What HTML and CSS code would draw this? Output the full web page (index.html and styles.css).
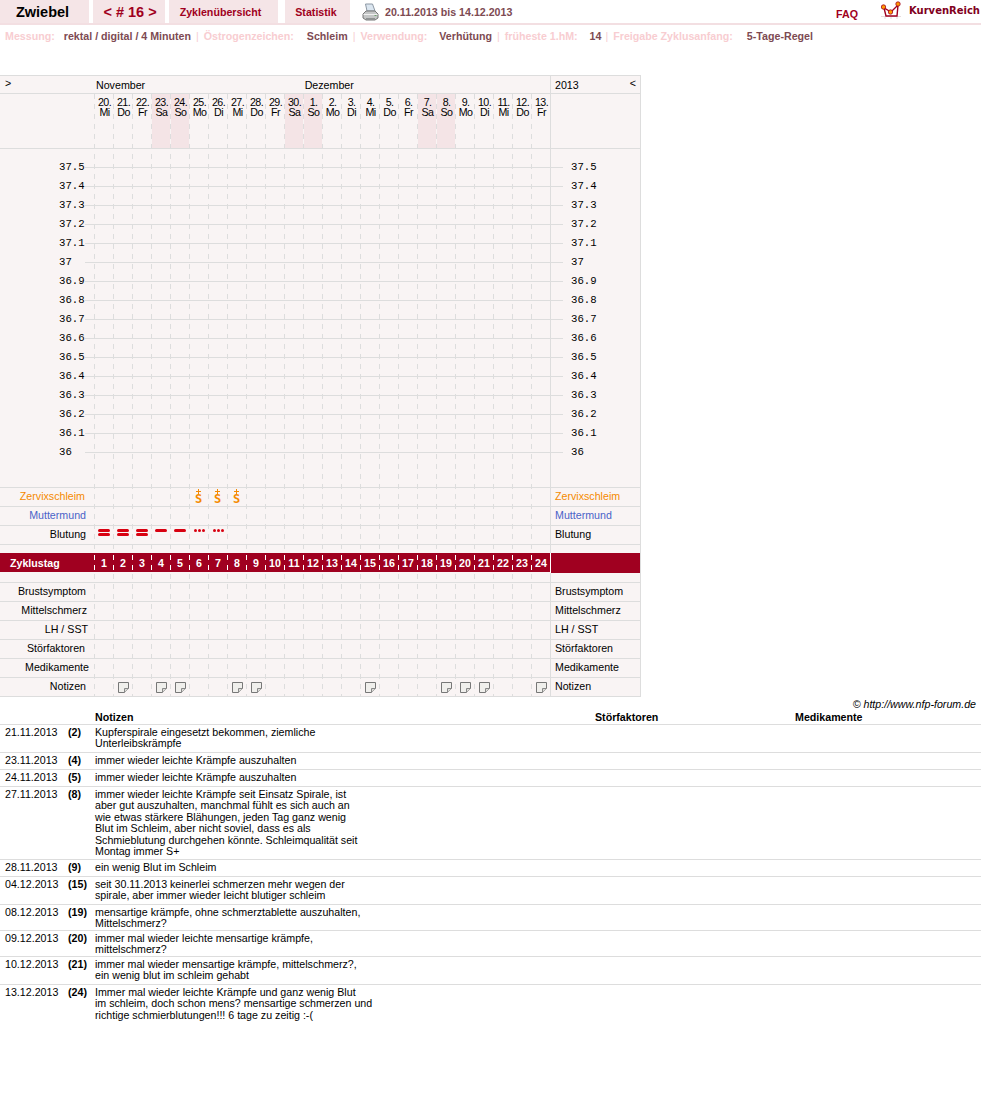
FILE: index.html
```html
<!DOCTYPE html>
<html lang="de">
<head>
<meta charset="utf-8">
<title>Zwiebel – Zyklus 16</title>
<link rel="stylesheet" href="styles.css">
</head>
<body>
<svg class="defs" width="0" height="0" aria-hidden="true">
  <symbol id="note" viewBox="0 0 11 11"><path d="M.5.5h10v6l-4 4h-6z" fill="#f0efec" stroke="#777"/><path d="M6.500 10.500v-4h4" fill="#dcdbd8" stroke="#888"/></symbol>
</svg>
<header class="top">
  <div class="tab tab-name">Zwiebel</div>
  <div class="tab tab-cycle">&lt; # 16 &gt;</div>
  <div class="tab tab-over">Zyklenübersicht</div>
  <div class="tab tab-stat">Statistik</div>
  <svg class="printer" width="17" height="19" viewBox="0 0 17 19"><path d="M3.500 1h7l2.500 7H5z" fill="#dbe6f0" stroke="#8d98a4"/><path d="M1 11l3-3h9l3 3v4l-3 2H4l-3-2z" fill="#c4c6c6" stroke="#777"/><path d="M1.500 11.500h14" stroke="#f0f0f0"/><path d="M4 15h9v2H4z" fill="#8f9292"/><path d="M12.500 12.500h2" stroke="#6fa36f"/></svg>
  <div class="range">20.11.2013 bis 14.12.2013</div>
  <a class="faq">FAQ</a>
  <svg class="crown" width="20" height="18" viewBox="0 0 20 18"><path d="M0 15.500h20M4 18v-3M10 18v-3M16 18v-3" stroke="#e6dcdc" fill="none"/><path d="M3 7l2 8h11l1-11-7 7z" fill="#fff" stroke="#a00020" stroke-width="1.400"/><circle cx="2.500" cy="6" r="2.200" fill="#f90" stroke="#a00020" stroke-width=".8"/><circle cx="9.500" cy="11" r="2.200" fill="#f90" stroke="#a00020" stroke-width=".8"/><circle cx="17" cy="3" r="2.200" fill="#f90" stroke="#a00020" stroke-width=".8"/></svg>
  <div class="brand">KurvenReich</div>
</header>
<div class="info">
  <span class="lbl">Messung:</span><span class="val v1">rektal / digital / 4 Minuten</span><span class="sep">|</span>
  <span class="lbl">Östrogenzeichen:</span><span class="val v2">Schleim</span><span class="sep">|</span>
  <span class="lbl">Verwendung:</span><span class="val v3">Verhütung</span><span class="sep">|</span>
  <span class="lbl">früheste 1.hM:</span><span class="val v4">14</span><span class="sep">|</span>
  <span class="lbl">Freigabe Zyklusanfang:</span><span class="val v5">5-Tage-Regel</span>
</div>

<section class="chart">
  <div class="vlines"></div>
  <div class="row head">
    <div class="arrow-l">&gt;</div>
    <div class="months"><span class="m-nov">November</span><span class="m-dez">Dezember</span></div>
    <div class="side year"><span>2013</span><span class="arrow-r">&lt;</span></div>
  </div>
  <div class="row days">
    <div></div>
    <div class="d">20.<br>Mi</div><div class="d">21.<br>Do</div><div class="d">22.<br>Fr</div><div class="d we">23.<br>Sa</div><div class="d we">24.<br>So</div><div class="d">25.<br>Mo</div><div class="d">26.<br>Di</div><div class="d">27.<br>Mi</div><div class="d">28.<br>Do</div><div class="d">29.<br>Fr</div><div class="d we">30.<br>Sa</div><div class="d we">1.<br>So</div><div class="d">2.<br>Mo</div><div class="d">3.<br>Di</div><div class="d">4.<br>Mi</div><div class="d">5.<br>Do</div><div class="d">6.<br>Fr</div><div class="d we">7.<br>Sa</div><div class="d we">8.<br>So</div><div class="d">9.<br>Mo</div><div class="d">10.<br>Di</div><div class="d">11.<br>Mi</div><div class="d">12.<br>Do</div><div class="d">13.<br>Fr</div>
    <div class="side"></div>
  </div>
  <div class="temps">
    <div class="t"><span>37.5</span><span>37.5</span></div>
    <div class="t"><span>37.4</span><span>37.4</span></div>
    <div class="t"><span>37.3</span><span>37.3</span></div>
    <div class="t"><span>37.2</span><span>37.2</span></div>
    <div class="t"><span>37.1</span><span>37.1</span></div>
    <div class="t"><span>37</span><span>37</span></div>
    <div class="t"><span>36.9</span><span>36.9</span></div>
    <div class="t"><span>36.8</span><span>36.8</span></div>
    <div class="t"><span>36.7</span><span>36.7</span></div>
    <div class="t"><span>36.6</span><span>36.6</span></div>
    <div class="t"><span>36.5</span><span>36.5</span></div>
    <div class="t"><span>36.4</span><span>36.4</span></div>
    <div class="t"><span>36.3</span><span>36.3</span></div>
    <div class="t"><span>36.2</span><span>36.2</span></div>
    <div class="t"><span>36.1</span><span>36.1</span></div>
    <div class="t"><span>36</span><span>36</span></div>
  </div>
  <div class="row rowline">
    <div class="name zerv pr9">Zervixschleim</div>
    <div class="c"></div><div class="c"></div><div class="c"></div><div class="c"></div><div class="c"></div>
    <div class="c mucus">S</div><div class="c mucus">S</div><div class="c mucus">S</div>
    <div class="side zerv">Zervixschleim</div>
  </div>
  <div class="row rowline">
    <div class="name mutt">Muttermund</div>
    <div class="side mutt">Muttermund</div>
  </div>
  <div class="row rowline">
    <div class="name">Blutung</div>
    <div class="c blood"><i class="bar"></i><i class="bar"></i></div><div class="c blood"><i class="bar"></i><i class="bar"></i></div><div class="c blood"><i class="bar"></i><i class="bar"></i></div>
    <div class="c blood"><i class="bar"></i></div><div class="c blood"><i class="bar"></i></div>
    <div class="c blood"><i class="dots"><b></b><b></b><b></b></i></div><div class="c blood"><i class="dots"><b></b><b></b><b></b></i></div>
    <div class="side">Blutung</div>
  </div>
  <div class="row gap-b"><div class="side"></div></div>
  <div class="row cycle">
    <div class="cycle-name">Zyklustag</div>
    <div>1</div><div>2</div><div>3</div><div>4</div><div>5</div><div>6</div><div>7</div><div>8</div><div>9</div><div>10</div><div>11</div><div>12</div><div>13</div><div>14</div><div>15</div><div>16</div><div>17</div><div>18</div><div>19</div><div>20</div><div>21</div><div>22</div><div>23</div><div>24</div>
    <div class="side"></div>
  </div>
  <div class="row rowline gap-c"><div class="side"></div></div>
  <div class="row rowline"><div class="name">Brustsymptom</div><div class="side">Brustsymptom</div></div>
  <div class="row rowline"><div class="name pr7">Mittelschmerz</div><div class="side">Mittelschmerz</div></div>
  <div class="row rowline"><div class="name pr6">LH / SST</div><div class="side">LH / SST</div></div>
  <div class="row rowline"><div class="name pr9">Störfaktoren</div><div class="side">Störfaktoren</div></div>
  <div class="row rowline"><div class="name pr5">Medikamente</div><div class="side">Medikamente</div></div>
  <div class="row rowline">
    <div class="name">Notizen</div>
    <div class="c"></div><div class="c n"><svg><use href="#note"/></svg></div><div class="c"></div><div class="c n"><svg><use href="#note"/></svg></div><div class="c n"><svg><use href="#note"/></svg></div><div class="c"></div><div class="c"></div><div class="c n"><svg><use href="#note"/></svg></div><div class="c n"><svg><use href="#note"/></svg></div><div class="c"></div><div class="c"></div><div class="c"></div><div class="c"></div><div class="c"></div><div class="c n"><svg><use href="#note"/></svg></div><div class="c"></div><div class="c"></div><div class="c"></div><div class="c n"><svg><use href="#note"/></svg></div><div class="c n"><svg><use href="#note"/></svg></div><div class="c n"><svg><use href="#note"/></svg></div><div class="c"></div><div class="c"></div><div class="c n"><svg><use href="#note"/></svg></div>
    <div class="side">Notizen</div>
  </div>
</section>

<p class="copy">© http://www.nfp-forum.de</p>

<table class="notes">
  <colgroup><col class="c-date"><col class="c-num"><col class="c-note"><col class="c-st"><col></colgroup>
  <thead><tr><th></th><th></th><th>Notizen</th><th>Störfaktoren</th><th>Medikamente</th></tr></thead>
  <tbody>
    <tr class="h28"><td>21.11.2013</td><td class="num">(2)</td><td>Kupferspirale eingesetzt bekommen, ziemliche<br>Unterleibskrämpfe</td><td></td><td></td></tr>
    <tr class="h17"><td>23.11.2013</td><td class="num">(4)</td><td>immer wieder leichte Krämpfe auszuhalten</td><td></td><td></td></tr>
    <tr class="h17"><td>24.11.2013</td><td class="num">(5)</td><td>immer wieder leichte Krämpfe auszuhalten</td><td></td><td></td></tr>
    <tr class="h73"><td>27.11.2013</td><td class="num">(8)</td><td>immer wieder leichte Krämpfe seit Einsatz Spirale, ist<br>aber gut auszuhalten, manchmal fühlt es sich auch an<br>wie etwas stärkere Blähungen, jeden Tag ganz wenig<br>Blut im Schleim, aber nicht soviel, dass es als<br>Schmieblutung durchgehen könnte. Schleimqualität seit<br>Montag immer S+</td><td></td><td></td></tr>
    <tr class="h17"><td>28.11.2013</td><td class="num">(9)</td><td>ein wenig Blut im Schleim</td><td></td><td></td></tr>
    <tr class="h28"><td>04.12.2013</td><td class="num">(15)</td><td>seit 30.11.2013 keinerlei schmerzen mehr wegen der<br>spirale, aber immer wieder leicht blutiger schleim</td><td></td><td></td></tr>
    <tr class="h26"><td>08.12.2013</td><td class="num">(19)</td><td>mensartige krämpfe, ohne schmerztablette auszuhalten,<br>Mittelschmerz?</td><td></td><td></td></tr>
    <tr class="h26"><td>09.12.2013</td><td class="num">(20)</td><td>immer mal wieder leichte mensartige krämpfe,<br>mittelschmerz?</td><td></td><td></td></tr>
    <tr class="h28"><td>10.12.2013</td><td class="num">(21)</td><td>immer mal wieder mensartige krämpfe, mittelschmerz?,<br>ein wenig blut im schleim gehabt</td><td></td><td></td></tr>
    <tr class="last"><td>13.12.2013</td><td class="num">(24)</td><td>Immer mal wieder leichte Krämpfe und ganz wenig Blut<br>im schleim, doch schon mens? mensartige schmerzen und<br>richtige schmierblutungen!!! 6 tage zu zeitig :-(</td><td></td><td></td></tr>
  </tbody>
</table>
</body>
</html>
```
FILE: styles.css
```css
* { box-sizing: border-box; }
html, body { margin: 0; padding: 0; }
body { background: #fff; color: #000; font: 10.67px/12px "Liberation Sans", Arial, sans-serif; width: 981px; height: 1106px; overflow: hidden; }
.defs { position: absolute; }

/* top bar */
.top { display: flex; height: 25px; border-bottom: 2px solid #f3dfe2; }
.tab { height: 23px; background: #f5e5e7; color: #a00020; font-weight: bold; display: flex; align-items: center; justify-content: center; }
.tab-name { width: 89px; color: #000; font-size: 14.5px; padding-right: 4px; }
.tab-cycle { width: 72px; margin-left: 4px; font-size: 14.5px; padding-left: 2px; }
.tab-over { width: 109px; margin-left: 4px; padding-right: 6px; }
.tab-stat { width: 65px; margin-left: 7px; padding-right: 3px; }
.printer { margin: 3px 0 0 12px; }
.range { margin: 6px 0 0 6px; color: #7d4a52; font-weight: bold; }
.faq { margin: 8px 0 0 auto; color: #a00020; font-weight: bold; }
.crown { margin: 1px 0 0 23px; }
.brand { margin: 5px 1px 0 8px; color: #800020; font: bold 10px/12px "DejaVu Sans", sans-serif; }

/* settings line */
.info { height: 50px; padding: 5px 0 0 5px; font-weight: bold; white-space: nowrap; }
.lbl { color: #f8cdd1; }
.val { color: #7d4a52; }
.sep { color: #f8cdd1; font-weight: normal; margin: 0 2px 0 5px; }
.v1 { margin-left: 9px; }
.v2 { margin-left: 13px; }
.v3 { margin-left: 12px; }
.v4 { margin: 0 -1px 0 12px; }
.v5 { margin-left: 14px; }

/* chart */
.chart { position: relative; width: 641px; background: #f9f4f4; border-top: 1px solid #ddd; border-right: 1px solid #ddd; }
.vlines { position: absolute; left: 94px; top: 18px; bottom: 0; width: 456px; background: url("data:image/svg+xml,%3Csvg xmlns='http://www.w3.org/2000/svg' width='19' height='10'%3E%3Crect width='1' height='5' fill='%23ddd'/%3E%3C/svg%3E") 0 0 / 19px 10px repeat; }
.row { position: relative; display: grid; grid-template-columns: 94px repeat(24, 19px) 90px; }
.rowline { height: 19px; border-bottom: 1px solid #ddd; align-items: center; }
.side { grid-column: 26; height: 100%; border-left: 1px solid #ddd; padding: 0 0 2px 4px; display: flex; align-items: center; }
.name { grid-column: 1; text-align: right; padding: 0 8px 2px 0; white-space: nowrap; }
.pr5 { padding-right: 5px; }
.pr6 { padding-right: 6px; }
.pr7 { padding-right: 7px; }
.pr9 { padding-right: 9px; }
.zerv { color: #f58a00; }
.mutt { color: #4a63c8; }

.head { height: 18px; border-bottom: 1px solid #ddd; grid-template-columns: 94px 456px 90px; }
.arrow-l { padding: 2px 0 0 5px; line-height: 11px; }
.months { position: relative; display: flex; align-items: center; padding-left: 2px; }
.m-dez { margin-left: 159.500px; }
.year { justify-content: space-between; padding: 0 4px 0 4px; grid-column: 3; }
.arrow-r { align-self: flex-start; line-height: 11px; margin-top: 2px; }

.days { height: 55px; border-bottom: 1px solid #ddd; }
.d { height: 54px; margin-left: 1px; width: 18px; padding: 3px 0 0 1px; text-align: center; letter-spacing: -.6px; line-height: 10px; }
.days > div:first-child { height: 54px; }
.we { background: #f4e4e6; }

.temps { height: 339px; padding-top: 9px; border-bottom: 1px solid #ddd; background: linear-gradient(#ddd, #ddd) no-repeat 550px 0 / 1px 100%; }
.t { position: relative; height: 19px; display: grid; grid-template-columns: 550px 90px; align-items: center; font: 10.67px/19px "Liberation Mono", monospace; background: linear-gradient(#ddd, #ddd) no-repeat 85px 9px / 478px 1px; }
.t span { display: block; width: 26px; margin-left: 59px; background: #f9f4f4; }
.t span + span { margin-left: 21px; }

.c { position: relative; height: 18px; display: flex; flex-direction: column; align-items: center; justify-content: center; }
.mucus { justify-content: flex-end; padding-bottom: 2px; color: #f58a00; font: bold 12px/9px "DejaVu Sans Mono", monospace; }
.mucus::before { content: ""; position: absolute; left: 7px; top: 1px; width: 5px; height: 5px; background: linear-gradient(#f58a00, #f58a00) no-repeat 0 2px / 5px 1px, linear-gradient(#f58a00, #f58a00) no-repeat 2px 0 / 1px 5px; }
.blood { justify-content: flex-start; padding-top: 3px; }
.bar { display: block; width: 12px; height: 3px; margin: 0 0 1px 1px; background: #d80010; border-radius: 2px; }
.dots { display: flex; gap: 1px; margin-left: 1px; }
.dots b { width: 3px; height: 3px; background: #d80010; border-radius: 50%; }
.n svg { width: 11px; height: 11px; margin-left: 1px; }

.gap-b { height: 8px; }
.gap-c { height: 11px; }
.cycle { height: 19px; z-index: 1; background: #a00020; color: #fff; font-weight: bold; line-height: 20px; text-align: center; }
.cycle > div { padding-left: 1px; background: url("data:image/svg+xml,%3Csvg xmlns='http://www.w3.org/2000/svg' width='19' height='10'%3E%3Crect width='1' height='5' fill='%23fff'/%3E%3C/svg%3E") 0 2px / 19px 10px repeat-y; }
.cycle > .cycle-name { text-align: left; padding-left: 10px; background: none; }
.cycle > .side { background: #a00020; border-left-color: #fff; }

/* notes */
.copy { margin: 1px 0 0; height: 13px; padding-right: 5px; text-align: right; font-style: italic; line-height: 12px; }
.notes { width: 981px; table-layout: fixed; border-collapse: collapse; line-height: 11.500px; }
.c-date { width: 68px; }
.c-num { width: 27px; }
.c-note { width: 500px; }
.c-st { width: 200px; }
.notes th { text-align: left; height: 13px; padding: 0; border-bottom: 1px solid #ddd; }
.notes td { vertical-align: top; padding: 2px 0 0; border-bottom: 1px solid #ddd; white-space: nowrap; }
.notes td:first-child { padding-left: 5px; }
.num { font-weight: bold; }
.h17 td { height: 17px; }
.h26 td { height: 26px; }
.h28 td { height: 28px; }
.h73 td { height: 73px; }
.last td { border-bottom: 0; }
```
